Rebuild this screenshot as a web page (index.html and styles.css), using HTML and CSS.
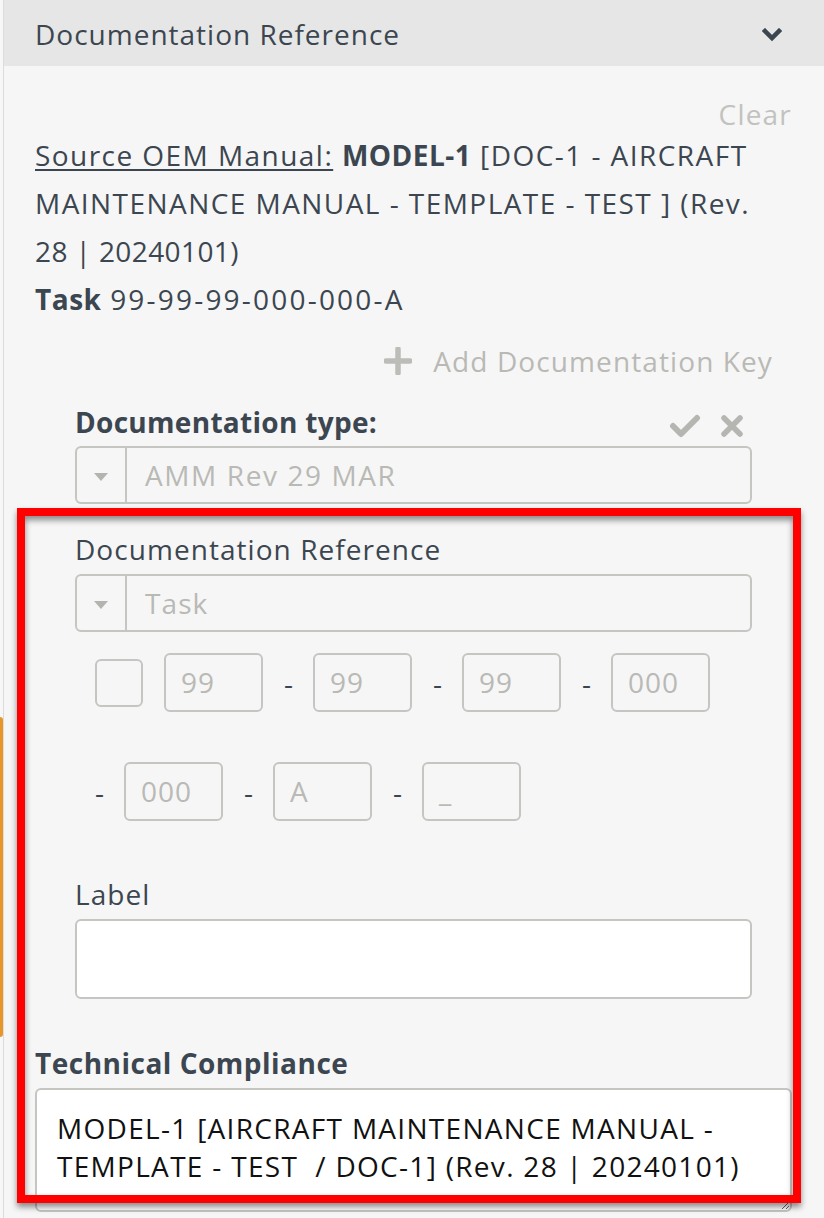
FILE: index.html
```html
<!DOCTYPE html>
<html>
<head>
<meta charset="utf-8">
<link rel="stylesheet" href="styles.css">
</head>
<body>
<div class="orange-tab"></div>
<div class="panel">
  <div class="panel-header">
    <span class="panel-title">Documentation Reference</span>
    <svg class="chevron" width="20" height="14" viewBox="0 0 20 14"><polyline points="3,3 10,10 17,3" fill="none" stroke="#3c4650" stroke-width="4.5" stroke-linecap="square"/></svg>
  </div>
  <div class="panel-body">
    <div class="clear-row"><span class="clear-link">Clear</span></div>
    <div class="source-info">
      <span class="underline">Source OEM Manual:</span> <b>MODEL-1</b> [DOC-1 - AIRCRAFT<br>MAINTENANCE MANUAL - TEMPLATE - TEST ] (Rev.<br><span class="rev-no">28 | 20240101)</span><br><b>Task</b> <span class="task-no">99-99-99-000-000-A</span>
    </div>
    <div class="add-key-row">
      <span class="add-key">
        <svg class="plus" width="28" height="28" viewBox="0 0 28 28"><path d="M14 2 V26 M2 14 H26" stroke="#bcbcb8" stroke-width="5.5" stroke-linecap="round"/></svg>
        <span>Add Documentation Key</span>
      </span>
    </div>
    <div class="key-form">
      <div class="field-head">
        <span class="strong-label">Documentation type:</span>
        <span class="head-actions">
          <svg width="32" height="24" viewBox="0 0 32 24"><polyline points="4,12 12,20 28,4" fill="none" stroke="#b5b5b1" stroke-width="6" stroke-linecap="round" stroke-linejoin="round"/></svg>
          <svg width="24" height="24" viewBox="0 0 24 24"><path d="M4 4 L20 20 M20 4 L4 20" stroke="#b5b5b1" stroke-width="5.5" stroke-linecap="round"/></svg>
        </span>
      </div>
      <div class="select">
        <span class="select-caret"><svg width="16" height="10" viewBox="0 0 16 10"><polygon points="1,1 15,1 8,9" fill="#b3b3af"/></svg></span>
        <span class="select-value caps">AMM Rev 29 MAR</span>
      </div>
      <div class="plain-label ref-label">Documentation Reference</div>
      <div class="select">
        <span class="select-caret"><svg width="16" height="10" viewBox="0 0 16 10"><polygon points="1,1 15,1 8,9" fill="#b3b3af"/></svg></span>
        <span class="select-value">Task</span>
      </div>
      <div class="segments">
        <span class="seg-check"></span>
        <span class="seg">99</span>
        <span class="seg-group"><span class="dash">-</span><span class="seg">99</span></span>
        <span class="seg-group"><span class="dash">-</span><span class="seg">99</span></span>
        <span class="seg-group"><span class="dash">-</span><span class="seg">000</span></span>
        <span class="seg-group"><span class="dash">-</span><span class="seg">000</span></span>
        <span class="seg-group"><span class="dash">-</span><span class="seg">A</span></span>
        <span class="seg-group"><span class="dash">-</span><span class="seg">_</span></span>
      </div>
      <div class="plain-label label-label">Label</div>
      <div class="text-input"></div>
    </div>
    <div class="tc-label">Technical Compliance</div>
    <textarea class="tc-text">MODEL-1 [AIRCRAFT MAINTENANCE MANUAL - TEMPLATE - TEST  / DOC-1] (Rev. 28 | 20240101)</textarea>
  </div>
</div>
<div class="highlight"></div>
</body>
</html>
```
FILE: styles.css
```css
html, body {
  margin: 0;
  padding: 0;
}
body {
  background: #f7f7f7;
  font-family: "Open Sans", "Liberation Sans", sans-serif;
  color: #3c4650;
  width: 824px;
  height: 1218px;
  overflow: hidden;
  position: relative;
}
.orange-tab {
  position: absolute;
  left: 0;
  top: 717px;
  width: 3px;
  height: 320px;
  background: #e8952a;
  border-radius: 0 3px 3px 0;
}
.panel {
  margin-left: 3px;
  border-left: 1px solid #dcdcdc;
  background: #f6f6f6;
  min-height: 1218px;
}
.panel-header {
  height: 66px;
  background: #e6e6e6;
  display: flex;
  align-items: center;
  justify-content: space-between;
  padding: 0 42px 0 31px;
}
.panel-title {
  font-size: 28px;
  letter-spacing: 1px;
  color: #3c4650;
  margin-top: 2px;
}
.chevron {
  margin-top: 4px;
}
.panel-body {
  padding: 31px 32px 0 31px;
}
.clear-row {
  height: 34px;
  line-height: 34px;
  text-align: right;
}
.clear-link {
  font-size: 28px;
  letter-spacing: 1.2px;
  color: #c2c2be;
}
.source-info {
  font-size: 28px;
  line-height: 48px;
  letter-spacing: 1.45px;
  color: #3c4650;
  white-space: nowrap;
}
.source-info b {
  font-weight: 700;
  letter-spacing: 0.5px;
}
.rev-no {
  letter-spacing: 0.4px;
}
.task-no {
  letter-spacing: 2.2px;
}
.underline {
  text-decoration: underline;
  text-decoration-thickness: 2px;
  text-underline-offset: 3px;
}
.add-key-row {
  margin-top: 18px;
  height: 40px;
  display: flex;
  justify-content: flex-end;
  padding-right: 19px;
}
.add-key {
  display: flex;
  align-items: center;
  gap: 21px;
  font-size: 28px;
  letter-spacing: 1.1px;
  color: #b9b9b5;
}
.key-form {
  margin: 21px 40px 0 40px;
}
.field-head {
  height: 40px;
  display: flex;
  align-items: center;
  justify-content: space-between;
}
.strong-label {
  font-size: 28px;
  font-weight: 700;
  letter-spacing: 0.3px;
  color: #3c4650;
}
.head-actions {
  display: flex;
  align-items: center;
  gap: 19px;
  margin-top: 8px;
  padding-right: 8px;
}
.select {
  margin-top: 4px;
  height: 58px;
  box-sizing: border-box;
  border: 2px solid #c5c5c1;
  border-radius: 6px;
  display: flex;
  align-items: stretch;
}
.select-caret {
  width: 50px;
  border-right: 2px solid #c5c5c1;
  display: flex;
  align-items: center;
  justify-content: center;
  padding-top: 4px;
  box-sizing: border-box;
}
.select-value {
  display: flex;
  align-items: center;
  padding-left: 18px;
  font-size: 28px;
  letter-spacing: 1.1px;
  color: #b9b9b5;
}
.select-value.caps {
  letter-spacing: 1.6px;
}
.plain-label {
  height: 40px;
  line-height: 40px;
  font-size: 28px;
  letter-spacing: 1.05px;
  color: #3c4650;
}
.ref-label {
  margin-top: 25px;
}
.ref-label + .select {
  margin-top: 5px;
}
.segments {
  margin-top: 21px;
  padding-left: 20px;
  display: flex;
  flex-wrap: wrap;
  align-items: center;
  column-gap: 21px;
  row-gap: 50px;
}
.seg-check {
  width: 48px;
  height: 48px;
  box-sizing: border-box;
  border: 2px solid #c5c5c1;
  border-radius: 6px;
}
.seg {
  width: 99px;
  height: 59px;
  box-sizing: border-box;
  border: 2px solid #c5c5c1;
  border-radius: 6px;
  padding-left: 15px;
  font-size: 28px;
  letter-spacing: 1px;
  line-height: 55px;
  color: #b9b9b5;
}
.seg-group {
  display: flex;
  align-items: center;
  gap: 21px;
}
.dash {
  width: 8px;
  text-align: center;
  font-size: 28px;
  color: #3c4650;
}
.label-label {
  margin-top: 53px;
}
.text-input {
  margin-top: 5px;
  height: 80px;
  box-sizing: border-box;
  background: #ffffff;
  border: 2px solid #c5c5c1;
  border-radius: 6px;
}
.tc-label {
  margin-top: 44px;
  height: 40px;
  line-height: 40px;
  font-size: 28px;
  font-weight: 700;
  letter-spacing: 0.5px;
  color: #3c4650;
}
.tc-text {
  display: block;
  margin-top: 5px;
  width: 100%;
  height: 124px;
  box-sizing: border-box;
  background: #ffffff;
  border: 2px solid #c5c5c1;
  border-radius: 6px;
  padding: 19px 20px 0 20px;
  font-family: "Open Sans", "Liberation Sans", sans-serif;
  font-size: 28px;
  line-height: 38px;
  letter-spacing: 1.3px;
  color: #111111;
  resize: vertical;
  overflow: hidden;
}
.highlight {
  position: absolute;
  left: 17px;
  top: 508px;
  width: 784px;
  height: 695px;
  box-sizing: border-box;
  border: 8px solid #ff0000;
  box-shadow: 0 4px 6px rgba(0, 0, 0, 0.45), inset 0 4px 6px rgba(0, 0, 0, 0.45);
  pointer-events: none;
}
```
